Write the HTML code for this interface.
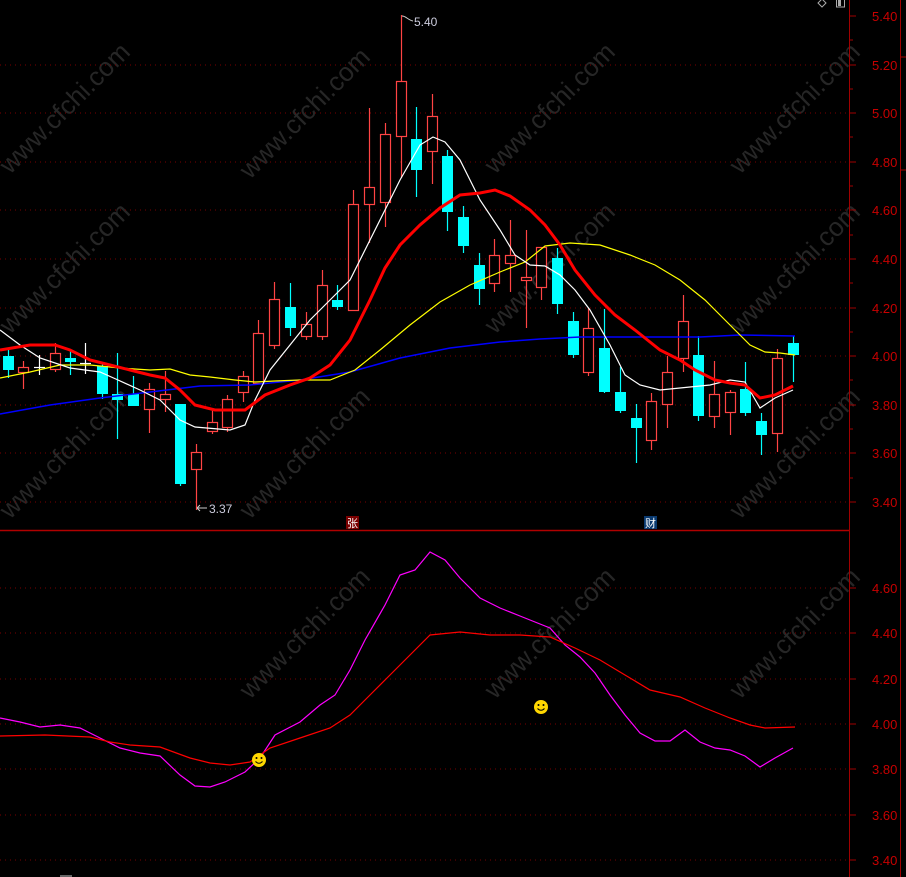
<!DOCTYPE html>
<html><head><meta charset="utf-8"><style>
html,body{margin:0;padding:0;background:#000;overflow:hidden}
svg{display:block}
text{font-family:"Liberation Sans","Noto Sans CJK SC",sans-serif}
</style></head><body>
<svg width="906" height="877" viewBox="0 0 906 877" xmlns="http://www.w3.org/2000/svg">
<rect width="906" height="877" fill="#000"/>
<g fill="#262626" font-size="26">
<text transform="translate(10,175) rotate(-45)">www.cfchi.com</text>
<text transform="translate(250,180) rotate(-45)">www.cfchi.com</text>
<text transform="translate(495,175) rotate(-45)">www.cfchi.com</text>
<text transform="translate(740,175) rotate(-45)">www.cfchi.com</text>
<text transform="translate(10,335) rotate(-45)">www.cfchi.com</text>
<text transform="translate(495,335) rotate(-45)">www.cfchi.com</text>
<text transform="translate(740,335) rotate(-45)">www.cfchi.com</text>
<text transform="translate(10,520) rotate(-45)">www.cfchi.com</text>
<text transform="translate(250,520) rotate(-45)">www.cfchi.com</text>
<text transform="translate(740,520) rotate(-45)">www.cfchi.com</text>
<text transform="translate(250,700) rotate(-45)">www.cfchi.com</text>
<text transform="translate(495,700) rotate(-45)">www.cfchi.com</text>
<text transform="translate(740,700) rotate(-45)">www.cfchi.com</text>
</g>
<g stroke="#7a0000" stroke-width="1" stroke-dasharray="1,4">
<line x1="0" y1="65" x2="848" y2="65"/><line x1="0" y1="113" x2="848" y2="113"/>
<line x1="0" y1="162" x2="848" y2="162"/><line x1="0" y1="210" x2="848" y2="210"/>
<line x1="0" y1="259" x2="848" y2="259"/><line x1="0" y1="308" x2="848" y2="308"/>
<line x1="0" y1="356" x2="848" y2="356"/><line x1="0" y1="405" x2="848" y2="405"/>
<line x1="0" y1="453" x2="848" y2="453"/><line x1="0" y1="502" x2="848" y2="502"/>
<line x1="0" y1="588" x2="848" y2="588"/><line x1="0" y1="633" x2="848" y2="633"/>
<line x1="0" y1="679" x2="848" y2="679"/><line x1="0" y1="724" x2="848" y2="724"/>
<line x1="0" y1="769" x2="848" y2="769"/><line x1="0" y1="815" x2="848" y2="815"/>
<line x1="0" y1="860" x2="848" y2="860"/>
</g>
<line x1="849.5" y1="0" x2="849.5" y2="877" stroke="#a00000"/>
<line x1="900.5" y1="0" x2="900.5" y2="877" stroke="#a00000"/>
<line x1="0" y1="530.5" x2="849" y2="530.5" stroke="#b00000" stroke-width="1.5"/>
<g stroke="#a00000">
<line x1="850" y1="16" x2="856" y2="16"/><line x1="850" y1="40" x2="853" y2="40"/><line x1="850" y1="65" x2="856" y2="65"/><line x1="850" y1="89" x2="853" y2="89"/><line x1="850" y1="113" x2="856" y2="113"/><line x1="850" y1="137" x2="853" y2="137"/><line x1="850" y1="162" x2="856" y2="162"/><line x1="850" y1="186" x2="853" y2="186"/><line x1="850" y1="210" x2="856" y2="210"/><line x1="850" y1="235" x2="853" y2="235"/><line x1="850" y1="259" x2="856" y2="259"/><line x1="850" y1="283" x2="853" y2="283"/><line x1="850" y1="308" x2="856" y2="308"/><line x1="850" y1="332" x2="853" y2="332"/><line x1="850" y1="356" x2="856" y2="356"/><line x1="850" y1="380" x2="853" y2="380"/><line x1="850" y1="405" x2="856" y2="405"/><line x1="850" y1="429" x2="853" y2="429"/><line x1="850" y1="453" x2="856" y2="453"/><line x1="850" y1="478" x2="853" y2="478"/><line x1="850" y1="502" x2="856" y2="502"/>
<line x1="850" y1="588" x2="856" y2="588"/><line x1="850" y1="633" x2="856" y2="633"/><line x1="850" y1="679" x2="856" y2="679"/><line x1="850" y1="724" x2="856" y2="724"/><line x1="850" y1="769" x2="856" y2="769"/><line x1="850" y1="815" x2="856" y2="815"/><line x1="850" y1="860" x2="856" y2="860"/>
<line x1="900" y1="57" x2="906" y2="57"/><line x1="900" y1="170" x2="906" y2="170"/>
</g>
<g fill="#c80000" font-size="13">
<text x="872" y="21">5.40</text><text x="872" y="70">5.20</text><text x="872" y="118">5.00</text><text x="872" y="167">4.80</text><text x="872" y="215">4.60</text><text x="872" y="264">4.40</text><text x="872" y="313">4.20</text><text x="872" y="361">4.00</text><text x="872" y="410">3.80</text><text x="872" y="458">3.60</text><text x="872" y="507">3.40</text>
<text x="872" y="593">4.60</text><text x="872" y="638">4.40</text><text x="872" y="684">4.20</text><text x="872" y="729">4.00</text><text x="872" y="774">3.80</text><text x="872" y="820">3.60</text><text x="872" y="865">3.40</text>
</g>
<path d="M822 -1 L826 3 L822 7 L818 3 Z" stroke="#aaa" fill="none"/>
<rect x="836.5" y="-1" width="8" height="8" fill="none" stroke="#aaa"/>
<rect x="838" y="0" width="3" height="6" fill="#aaa"/>
<g stroke-width="1.2">
<g stroke="#00ffff">
<line x1="8.5" y1="348" x2="8.5" y2="378"/><line x1="70.5" y1="350" x2="70.5" y2="375"/><line x1="102.5" y1="362" x2="102.5" y2="399"/><line x1="117.5" y1="353" x2="117.5" y2="439"/><line x1="133.5" y1="376" x2="133.5" y2="406"/><line x1="180.5" y1="404" x2="180.5" y2="486"/><line x1="290.5" y1="283" x2="290.5" y2="336"/><line x1="337.5" y1="285" x2="337.5" y2="310"/><line x1="416.5" y1="107" x2="416.5" y2="197"/><line x1="447.5" y1="150" x2="447.5" y2="231"/><line x1="463.5" y1="206" x2="463.5" y2="253"/><line x1="479.5" y1="253" x2="479.5" y2="305"/><line x1="557.5" y1="248" x2="557.5" y2="314"/><line x1="573.5" y1="312" x2="573.5" y2="358"/><line x1="604.5" y1="309" x2="604.5" y2="393"/><line x1="620.5" y1="367" x2="620.5" y2="413"/><line x1="636.5" y1="404" x2="636.5" y2="463"/><line x1="698.5" y1="336" x2="698.5" y2="421"/><line x1="745.5" y1="362" x2="745.5" y2="416"/><line x1="761.5" y1="413" x2="761.5" y2="455"/><line x1="793.5" y1="336" x2="793.5" y2="382"/>
</g>
<g stroke="#ff4444">
<line x1="23.5" y1="361" x2="23.5" y2="389"/><line x1="55.5" y1="343" x2="55.5" y2="372"/><line x1="149.5" y1="383" x2="149.5" y2="433"/><line x1="165.5" y1="371" x2="165.5" y2="412"/><line x1="196.5" y1="444" x2="196.5" y2="510"/><line x1="212.5" y1="408" x2="212.5" y2="434"/><line x1="227.5" y1="395" x2="227.5" y2="432"/><line x1="243.5" y1="371" x2="243.5" y2="402"/><line x1="258.5" y1="320" x2="258.5" y2="383"/><line x1="274.5" y1="282" x2="274.5" y2="349"/><line x1="306.5" y1="312" x2="306.5" y2="340"/><line x1="322.5" y1="270" x2="322.5" y2="340"/><line x1="353.5" y1="190" x2="353.5" y2="310"/><line x1="369.5" y1="108" x2="369.5" y2="243"/><line x1="385.5" y1="123" x2="385.5" y2="227"/><line x1="401.5" y1="15" x2="401.5" y2="178"/><line x1="432.5" y1="94" x2="432.5" y2="184"/><line x1="494.5" y1="239" x2="494.5" y2="292"/><line x1="510.5" y1="220" x2="510.5" y2="292"/><line x1="526.5" y1="230" x2="526.5" y2="328"/><line x1="541.5" y1="247" x2="541.5" y2="300"/><line x1="588.5" y1="308" x2="588.5" y2="376"/><line x1="651.5" y1="393" x2="651.5" y2="450"/><line x1="667.5" y1="356" x2="667.5" y2="428"/><line x1="683.5" y1="295" x2="683.5" y2="372"/><line x1="714.5" y1="361" x2="714.5" y2="428"/><line x1="730.5" y1="390" x2="730.5" y2="435"/><line x1="777.5" y1="349" x2="777.5" y2="452"/>
</g>
<g stroke="#fff"><line x1="39.5" y1="355" x2="39.5" y2="375"/><line x1="34" y1="367.5" x2="45" y2="367.5"/><line x1="85.5" y1="343" x2="85.5" y2="374"/><line x1="80" y1="363.5" x2="91" y2="363.5"/></g>
</g>
<g fill="#00ffff">
<rect x="3" y="356" width="11" height="14"/><rect x="65" y="358" width="11" height="4"/><rect x="97" y="366" width="11" height="28"/><rect x="112" y="394" width="11" height="6"/><rect x="128" y="394" width="11" height="12"/><rect x="175" y="404" width="11" height="80"/><rect x="285" y="307" width="11" height="21"/><rect x="332" y="300" width="11" height="7"/><rect x="411" y="139" width="11" height="31"/><rect x="442" y="156" width="11" height="56"/><rect x="458" y="217" width="11" height="29"/><rect x="474" y="265" width="11" height="24"/><rect x="552" y="258" width="11" height="46"/><rect x="568" y="321" width="11" height="34"/><rect x="599" y="348" width="11" height="44"/><rect x="615" y="392" width="11" height="19"/><rect x="631" y="418" width="11" height="10"/><rect x="693" y="355" width="11" height="61"/><rect x="740" y="389" width="11" height="24"/><rect x="756" y="421" width="11" height="14"/><rect x="788" y="343" width="11" height="12"/>
</g>
<g fill="#000" stroke="#ff4444" stroke-width="1.2">
<rect x="18.5" y="367.5" width="10" height="5"/><rect x="50.5" y="353.5" width="10" height="16"/><rect x="144.5" y="389.5" width="10" height="20"/><rect x="160.5" y="394.5" width="10" height="5"/><rect x="191.5" y="452.5" width="10" height="17"/><rect x="207.5" y="422.5" width="10" height="9"/><rect x="222.5" y="399.5" width="10" height="28"/><rect x="238.5" y="376.5" width="10" height="16"/><rect x="253.5" y="333.5" width="10" height="50"/><rect x="269.5" y="299.5" width="10" height="46"/><rect x="301.5" y="324.5" width="10" height="12"/><rect x="317.5" y="285.5" width="10" height="51"/><rect x="348.5" y="204.5" width="10" height="106"/><rect x="364.5" y="187.5" width="10" height="17"/><rect x="380.5" y="134.5" width="10" height="68"/><rect x="396.5" y="81.5" width="10" height="55"/><rect x="427.5" y="116.5" width="10" height="35"/><rect x="489.5" y="255.5" width="10" height="28"/><rect x="505.5" y="255.5" width="10" height="8"/><rect x="521.5" y="277.5" width="10" height="3"/><rect x="536.5" y="247.5" width="10" height="40"/><rect x="583.5" y="328.5" width="10" height="44"/><rect x="646.5" y="401.5" width="10" height="39"/><rect x="662.5" y="372.5" width="10" height="32"/><rect x="678.5" y="321.5" width="10" height="37"/><rect x="709.5" y="394.5" width="10" height="22"/><rect x="725.5" y="392.5" width="10" height="20"/><rect x="772.5" y="358.5" width="10" height="75"/>
</g>
<polyline fill="none" stroke="#0000ff" stroke-width="1.5" points="0,414 50,405 100,398 150,392 200,386 250,385 300,380 350,372 400,358 450,348 500,342 540,339 580,337 650,337 700,337 740,335 795,336"/>
<polyline fill="none" stroke="#ffff00" stroke-width="1.2" points="0,378 30,372 60,365 90,365 120,368 150,370 170,369 190,375 210,377 235,380 255,382 275,381 300,380 330,380 355,370 380,350 410,325 440,302 470,285 500,272 525,262 545,246 570,243 600,245 630,255 655,265 680,280 705,300 720,315 735,330 750,345 765,352 780,353 795,355"/>
<polyline fill="none" stroke="#ffffff" stroke-width="1.2" points="0,330 20,345 40,358 70,368 100,372 118,380 140,390 160,400 180,420 195,427 230,430 245,425 255,400 270,370 290,345 310,320 330,300 350,280 370,240 385,210 400,180 420,145 433,137 445,142 460,160 480,200 500,230 515,255 530,265 545,266 560,275 575,290 590,310 610,345 625,375 640,385 660,390 680,388 710,385 730,380 745,382 760,408 775,398 793,390"/>
<polyline fill="none" stroke="#ff0000" stroke-width="3" points="0,350 30,345 55,345 70,350 90,360 110,365 130,370 150,375 165,378 180,390 195,405 215,410 245,410 265,395 290,385 310,378 330,365 350,340 370,300 385,268 400,245 420,225 440,208 460,195 480,193 495,190 510,196 530,210 545,225 560,245 575,270 595,295 615,315 635,330 660,350 680,360 695,370 715,380 730,383 745,385 760,398 775,395 793,386"/>
<text x="414" y="26" fill="#ccd" font-size="12">5.40</text>
<path d="M402 16 C406 16 408 20 413 21" stroke="#ccc" fill="none"/>
<text x="209" y="513" fill="#ccd" font-size="12">3.37</text>
<path d="M197 508 L207 508 M197 508 L200 505 M197 508 L200 511" stroke="#ccc" fill="none"/>
<rect x="346" y="516" width="13" height="13" fill="#7a0000"/>
<text x="347" y="527" fill="#fff" font-size="11">张</text>
<rect x="644" y="516" width="13" height="13" fill="#0a3a70"/>
<text x="645" y="527" fill="#fff" font-size="11">财</text>
<polyline fill="none" stroke="#ff00ff" stroke-width="1.2" points="0,718 20,722 40,727 60,725 80,728 100,738 120,748 140,753 160,756 180,775 195,786 210,787 225,782 245,772 260,758 275,735 300,722 320,705 335,695 350,670 365,640 385,605 400,575 415,570 430,552 445,560 460,578 480,598 500,608 520,616 535,622 550,628 565,645 580,657 595,673 610,695 625,715 640,733 655,741 670,741 685,730 700,742 715,748 730,750 745,756 760,767 775,758 793,748"/>
<polyline fill="none" stroke="#ff0000" stroke-width="1.2" points="0,736 45,735 90,737 110,742 130,745 160,747 190,758 210,763 230,765 250,762 270,748 300,738 330,728 350,715 370,695 390,675 410,655 430,635 460,632 490,635 520,635 550,637 575,648 600,660 625,675 650,690 680,697 705,708 730,718 750,725 765,728 795,727"/>
<circle cx="259" cy="760" r="7" fill="#ffd700"/><circle cx="256.5" cy="758" r="1" fill="#000"/><circle cx="261.5" cy="758" r="1" fill="#000"/><path d="M255.5 761.5 Q259 765 262.5 761.5" stroke="#000" fill="none"/>
<circle cx="541" cy="707" r="7" fill="#ffd700"/><circle cx="538.5" cy="705" r="1" fill="#000"/><circle cx="543.5" cy="705" r="1" fill="#000"/><path d="M537.5 708.5 Q541 712 544.5 708.5" stroke="#000" fill="none"/>
<line x1="60" y1="876" x2="72" y2="876" stroke="#ccc"/>
</svg>
</body></html>
